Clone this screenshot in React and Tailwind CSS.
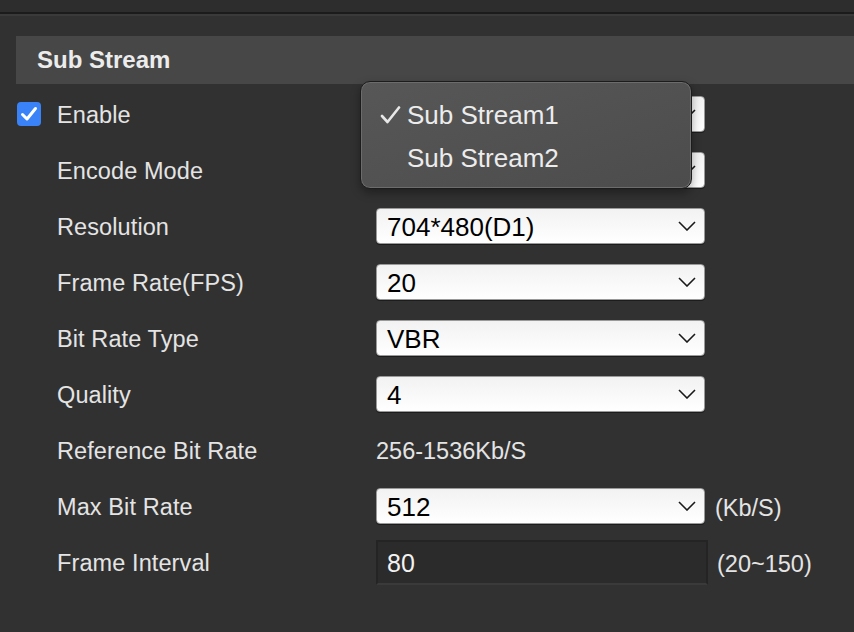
import React from "react";

const font = { fontFamily: '"Liberation Sans", Arial, sans-serif' };

function Chevron() {
  return (
    <svg width="18" height="10" viewBox="0 0 18 10" className="shrink-0">
      <path d="M1 1 L9 9 L17 1" fill="none" stroke="#1a1a1a" strokeWidth="1.6" />
    </svg>
  );
}

function Select({ value }) {
  return (
    <div className="flex h-[36px] w-[329px] items-center justify-between rounded-[4px] border border-[#9a9a9a] bg-gradient-to-b from-[#f2f2f2] to-white pl-[10px] pr-[8px] shadow-[0_1px_0_#1c1c1c]">
      <span className="pt-[2px] text-[26px] leading-none text-black">{value}</span>
      <Chevron />
    </div>
  );
}

function Row({ label, children, checkbox }) {
  return (
    <div className="flex h-[56px] items-center">
      <div className="flex w-[376px] items-center pl-[17px]">
        {checkbox ? (
          <div className="flex h-[24px] w-[24px] items-center justify-center rounded-[4px] bg-[#3a82f7]">
            <svg width="18" height="16" viewBox="0 0 18 16">
              <path d="M2.5 8.5 L7 13 L15.5 2.5" fill="none" stroke="white" strokeWidth="3" strokeLinecap="round" strokeLinejoin="round" />
            </svg>
          </div>
        ) : (
          <div className="w-[24px]" />
        )}
        <span className="ml-[16px] pt-[3px] text-[23.5px] leading-none tracking-[0.1px] text-[#e4e4e4]">{label}</span>
      </div>
      {children}
    </div>
  );
}

export default function App() {
  return (
    <div className="relative h-[632px] w-[854px] overflow-hidden bg-[#313131]" style={font}>
      <div className="h-[12px] bg-[#2d2d2d]" />
      <div className="h-[2px] bg-[#1b1b1b]" />
      <div className="h-[2px] bg-[#3a3a3a]" />
      <div className="pt-[20px]">
        <div className="ml-[16px] flex h-[48px] items-center bg-[#474747] pl-[21px]">
          <span className="text-[24px] font-bold leading-none text-[#ececec]">Sub Stream</span>
        </div>
        <div className="pt-[2px]">
          <Row label="Enable" checkbox>
            <Select value="" />
          </Row>
          <Row label="Encode Mode">
            <Select value="" />
          </Row>
          <Row label="Resolution">
            <Select value="704*480(D1)" />
          </Row>
          <Row label="Frame Rate(FPS)">
            <Select value="20" />
          </Row>
          <Row label="Bit Rate Type">
            <Select value="VBR" />
          </Row>
          <Row label="Quality">
            <Select value="4" />
          </Row>
          <Row label="Reference Bit Rate">
            <span className="pt-[3px] text-[23.5px] leading-none text-[#e4e4e4]">256-1536Kb/S</span>
          </Row>
          <Row label="Max Bit Rate">
            <Select value="512" />
            <span className="ml-[10px] pt-[5px] text-[23.5px] leading-none text-[#e4e4e4]">(Kb/S)</span>
          </Row>
          <Row label="Frame Interval">
            <div className="flex h-[45px] w-[332px] items-center border-2 border-[#242424] border-b-[#3a3a3a] bg-[#2b2b2b] pl-[9px]">
              <span className="pt-[2px] text-[25px] leading-none text-[#f2f2f2]">80</span>
            </div>
            <span className="ml-[9px] pt-[5px] text-[23.5px] leading-none text-[#e4e4e4]">(20~150)</span>
          </Row>
        </div>
      </div>

      <div className="absolute left-[360px] top-[81px] flex h-[108px] w-[332px] flex-col justify-center rounded-[10px] border border-[#1c1c1c] bg-gradient-to-br from-[#575757] to-[#4c4c4c] shadow-[inset_0_0_0_1px_#6c6c6c,0_4px_10px_rgba(0,0,0,0.35)]">
        <div className="flex h-[44px] items-center pt-[3px]">
          <div className="flex w-[46px] justify-end pr-[6px]">
            <svg width="21" height="18" viewBox="0 0 21 18">
              <path d="M2 10 L7.5 16 L19 1.5" fill="none" stroke="#e8e8e8" strokeWidth="2.6" strokeLinecap="round" strokeLinejoin="round" />
            </svg>
          </div>
          <span className="text-[26px] leading-none text-[#ececec]">Sub Stream1</span>
        </div>
        <div className="flex h-[44px] items-center pt-[2px]">
          <span className="w-[46px]" />
          <span className="text-[26px] leading-none text-[#ececec]">Sub Stream2</span>
        </div>
      </div>
    </div>
  );
}
